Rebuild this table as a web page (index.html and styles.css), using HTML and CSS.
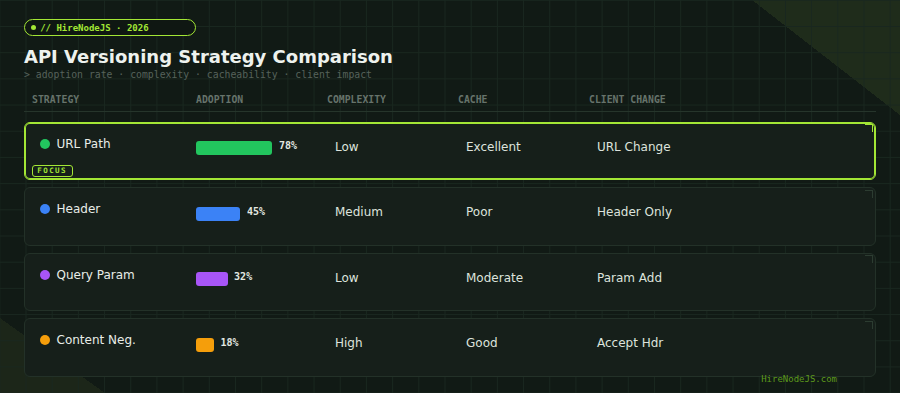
FILE: index.html
```html
<!DOCTYPE html>
<html lang="en">
<head>
<meta charset="utf-8">
<title>API Versioning Strategy Comparison</title>
<link rel="stylesheet" href="styles.css">
</head>
<body>
<main class="page">
  <div class="tag"><span class="tag-dot"></span><span>// HireNodeJS · 2026</span></div>
  <h1 class="title">API Versioning Strategy Comparison</h1>
  <p class="subtitle">&gt; adoption rate · complexity · cacheability · client impact</p>

  <div class="thead">
    <div>STRATEGY</div>
    <div>ADOPTION</div>
    <div>COMPLEXITY</div>
    <div>CACHE</div>
    <div>CLIENT CHANGE</div>
  </div>

  <div class="rows">
    <div class="row active">
      <div class="name"><span class="dot green"></span>URL Path</div>
      <div class="adopt"><span class="bar green" style="width:76.4px"></span><span class="pct">78%</span></div>
      <div class="val">Low</div>
      <div class="val">Excellent</div>
      <div class="val">URL Change</div>
      <span class="focus">FOCUS</span>
      <span class="corner"></span>
    </div>
    <div class="row">
      <div class="name"><span class="dot blue"></span>Header</div>
      <div class="adopt"><span class="bar blue" style="width:44.4px"></span><span class="pct">45%</span></div>
      <div class="val">Medium</div>
      <div class="val">Poor</div>
      <div class="val">Header Only</div>
      <span class="corner"></span>
    </div>
    <div class="row">
      <div class="name"><span class="dot purple"></span>Query Param</div>
      <div class="adopt"><span class="bar purple" style="width:31.6px"></span><span class="pct">32%</span></div>
      <div class="val">Low</div>
      <div class="val">Moderate</div>
      <div class="val">Param Add</div>
      <span class="corner"></span>
    </div>
    <div class="row">
      <div class="name"><span class="dot orange"></span>Content Neg.</div>
      <div class="adopt"><span class="bar orange" style="width:18px"></span><span class="pct">18%</span></div>
      <div class="val">High</div>
      <div class="val">Good</div>
      <div class="val">Accept Hdr</div>
      <span class="corner"></span>
    </div>
  </div>

  <div class="site">HireNodeJS.com</div>
</main>
</body>
</html>
```

FILE: styles.css
```css
* { box-sizing: border-box; }

html, body {
  margin: 0;
  padding: 0;
  width: 900px;
  height: 393px;
  overflow: hidden;
}

body {
  font-family: "DejaVu Sans", "Liberation Sans", sans-serif;
  color: #e6ebe6;
  background-color: #111a15;
  background:
    linear-gradient(90deg, #19271f 1px, transparent 1px) -0.7px -0.2px / 26.2px 26.2px,
    linear-gradient(180deg, #19271f 1px, transparent 1px) -0.7px -0.2px / 26.2px 26.2px,
    linear-gradient(to bottom left, #1f2c1b 50%, transparent 50%) right top / 148px 115px no-repeat,
    linear-gradient(to top right, #1c2619 50%, transparent 50%) left bottom / 105px 75px no-repeat,
    #111a15;
}

.page {
  position: relative;
  width: 900px;
  height: 393px;
  padding: 19px 24px 0;
}

.tag {
  display: flex;
  align-items: center;
  width: 172px;
  height: 17px;
  padding-left: 5.5px;
  border: 1.5px solid #a3e635;
  border-radius: 9px;
  background: #0f1712;
  font-family: "DejaVu Sans Mono", "Liberation Mono", monospace;
  font-weight: bold;
  font-size: 9px;
  line-height: 12px;
  color: #a3e635;
}

.tag-dot {
  width: 5px;
  height: 5px;
  border-radius: 50%;
  background: #a3e635;
  margin-right: 4.7px;
}

.title {
  margin: 10px 0 0;
  font-size: 18px;
  line-height: 22px;
  font-weight: bold;
  color: #eef2ee;
}

.subtitle {
  margin: 1px 0 0;
  font-family: "DejaVu Sans Mono", "Liberation Mono", monospace;
  font-size: 9.8px;
  line-height: 12px;
  color: #56625b;
}

.thead {
  display: grid;
  grid-template-columns: 164px 131px 131px 131px 1fr;
  margin-top: 12.5px;
  padding: 0 8px 5.5px;
  border-bottom: 1px solid #26352b;
  font-family: "DejaVu Sans Mono", "Liberation Mono", monospace;
  font-weight: bold;
  font-size: 9.8px;
  line-height: 12px;
  color: #66736b;
}

.rows {
  display: flex;
  flex-direction: column;
  gap: 7px;
  margin-top: 9.7px;
}

.row {
  position: relative;
  display: grid;
  grid-template-columns: 164px 131px 131px 131px 1fr;
  align-items: start;
  height: 58.6px;
  padding: 13px 7px 0;
  background: #161f1a;
  border: 1px solid #233128;
  border-radius: 6px;
  font-size: 12px;
  line-height: 16px;
}

.row.active {
  border-color: #a3e635;
  box-shadow: inset 0 0 0 1px #a3e635;
}

.corner {
  position: absolute;
  top: 1.5px;
  right: 2px;
  width: 8px;
  height: 8px;
  border-top: 1.5px solid #2c3c31;
  border-right: 1.5px solid #2c3c31;
}

.row.active .corner {
  border-color: #a3e635;
}

.name {
  display: flex;
  align-items: center;
  padding-left: 8px;
  color: #e8ede8;
}

.dot {
  width: 10px;
  height: 10px;
  border-radius: 50%;
  margin-right: 6.5px;
  flex: none;
}

.green { background: #22c55e; }
.blue { background: #3b82f6; }
.purple { background: #a855f7; }
.orange { background: #f59e0b; }

.adopt {
  display: flex;
  align-items: flex-start;
}

.bar {
  height: 14px;
  margin-top: 5.3px;
  border-radius: 3px;
  flex: none;
}

.pct {
  margin-top: 4.3px;
  margin-left: 6.5px;
  font-family: "DejaVu Sans Mono", "Liberation Mono", monospace;
  font-weight: bold;
  font-size: 10px;
  line-height: 12px;
  color: #e2e8e2;
}

.val {
  margin-top: 3px;
  padding-left: 8px;
  color: #dde3dd;
}

.focus {
  position: absolute;
  left: 7.3px;
  bottom: 2.6px;
  width: 41px;
  height: 12px;
  padding-left: 4px;
  border: 1px solid #a3e635;
  border-radius: 3px;
  font-family: "DejaVu Sans Mono", "Liberation Mono", monospace;
  font-weight: bold;
  font-size: 7.5px;
  line-height: 10px;
  letter-spacing: 1.4px;
  color: #a3e635;
}

.site {
  position: absolute;
  right: 63px;
  bottom: 8px;
  font-family: "DejaVu Sans Mono", "Liberation Mono", monospace;
  font-size: 9px;
  line-height: 11px;
  color: #5e9a1c;
}
```
